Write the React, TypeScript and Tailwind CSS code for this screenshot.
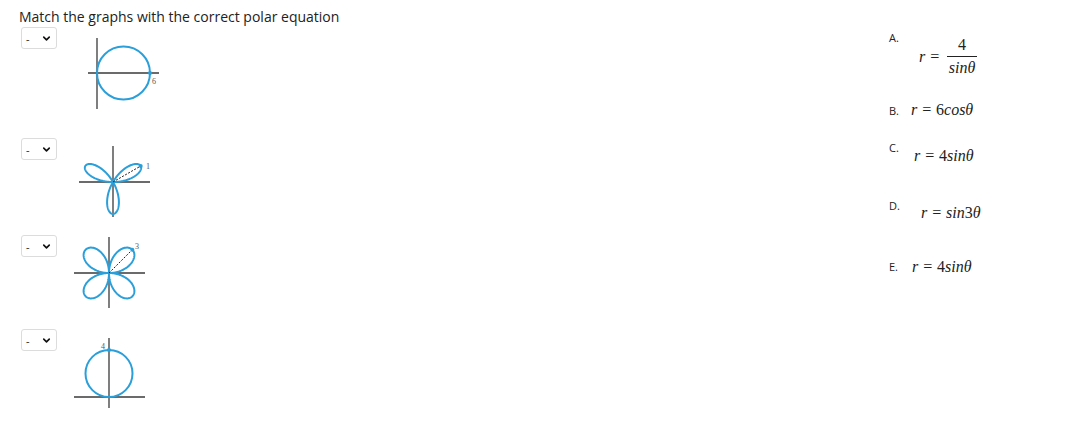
import React from "react";
import { ChevronDown } from "lucide-react";

const BLUE = "#2a9fda";
const AXIS = "#3a3a3a";

function rosePath(ox: number, oy: number, a: number, k: number, tMax: number) {
  const pts: string[] = [];
  const n = 360;
  for (let i = 0; i <= n; i++) {
    const t = (tMax * i) / n;
    const r = a * Math.sin(k * t);
    const x = ox + r * Math.cos(t);
    const y = oy - r * Math.sin(t);
    pts.push(`${i === 0 ? "M" : "L"}${x.toFixed(2)},${y.toFixed(2)}`);
  }
  return pts.join(" ");
}

function Select() {
  return (
    <div className="flex h-[22px] w-[36px] shrink-0 items-center justify-between rounded-[3px] border border-[#dcdcdc] bg-white pl-[4px] pr-[4px]">
      <span className="text-[11px] leading-none text-[#222]" style={{ fontFamily: "'Open Sans', sans-serif" }}>-</span>
      <ChevronDown size={11} strokeWidth={3.5} color="#111" />
    </div>
  );
}

function Graph1() {
  return (
    <svg width="100" height="72" className="ml-[13px] mt-[11px] shrink-0">
      <line x1="27" y1="0" x2="27" y2="71" stroke={AXIS} strokeWidth="1.3" />
      <line x1="18" y1="35" x2="89" y2="35" stroke={AXIS} strokeWidth="1.3" />
      <circle cx="53.5" cy="35" r="26.5" fill="none" stroke={BLUE} strokeWidth="2" />
      <circle cx="80" cy="35" r="2" fill={BLUE} />
      <text x="82" y="46" fontSize="8" fill="#555" fontFamily="'Liberation Serif', serif">6</text>
    </svg>
  );
}

function Graph2() {
  const ox = 43, oy = 36, a = 32;
  const tx = ox + a * Math.cos(Math.PI / 6);
  const ty = oy - a * Math.sin(Math.PI / 6);
  return (
    <svg width="100" height="72" className="ml-[13px] mt-[8px] shrink-0">
      <line x1={ox} y1="0" x2={ox} y2="71" stroke={AXIS} strokeWidth="1.3" />
      <line x1="9" y1={oy} x2="80" y2={oy} stroke={AXIS} strokeWidth="1.3" />
      <path d={rosePath(ox, oy, a, 3, Math.PI)} fill="none" stroke={BLUE} strokeWidth="2" />
      <line x1={ox} y1={oy} x2={tx} y2={ty} stroke="#222" strokeWidth="1" strokeDasharray="2 1.5" />
      <circle cx={tx} cy={ty} r="2" fill={BLUE} />
      <text x="76" y="23" fontSize="8" fill="#555" fontFamily="'Liberation Serif', serif">1</text>
    </svg>
  );
}

function Graph3() {
  const ox = 39, oy = 36, a = 33;
  const tx = ox + a * Math.cos(Math.PI / 4);
  const ty = oy - a * Math.sin(Math.PI / 4);
  return (
    <svg width="100" height="72" className="ml-[13px] mt-[2px] shrink-0">
      <line x1={ox} y1="0" x2={ox} y2="71" stroke={AXIS} strokeWidth="1.3" />
      <line x1="4" y1={oy} x2="75" y2={oy} stroke={AXIS} strokeWidth="1.3" />
      <path d={rosePath(ox, oy, a, 2, 2 * Math.PI)} fill="none" stroke={BLUE} strokeWidth="2" />
      <line x1={ox} y1={oy} x2={tx} y2={ty} stroke="#222" strokeWidth="1" strokeDasharray="2 1.5" />
      <circle cx={tx} cy={ty} r="2" fill={BLUE} />
      <text x="65" y="12" fontSize="8" fill="#555" fontFamily="'Liberation Serif', serif">3</text>
    </svg>
  );
}

function Graph4() {
  return (
    <svg width="100" height="72" className="ml-[13px] mt-[9px] shrink-0">
      <line x1="39" y1="0" x2="39" y2="70" stroke={AXIS} strokeWidth="1.3" />
      <line x1="4" y1="59" x2="75" y2="59" stroke={AXIS} strokeWidth="1.3" />
      <circle cx="39" cy="35.5" r="23.5" fill="none" stroke={BLUE} strokeWidth="2" />
      <circle cx="39" cy="12" r="2" fill={BLUE} />
      <text x="31" y="11" fontSize="8" fill="#555" fontFamily="'Liberation Serif', serif">4</text>
    </svg>
  );
}

const mathFont = { fontFamily: "'Liberation Serif', 'DejaVu Serif', serif" };
const labelFont = { fontFamily: "'Open Sans', 'Liberation Sans', sans-serif" };

function Label({ children, className }: { children: React.ReactNode; className?: string }) {
  return (
    <span className={"w-[22px] shrink-0 text-[11px] leading-[11px] text-[#222] " + (className ?? "")} style={labelFont}>
      {children}
    </span>
  );
}

function Eq({ children, className }: { children: React.ReactNode; className?: string }) {
  return (
    <span className={"whitespace-pre text-[16px] italic leading-[16px] text-[#222] " + (className ?? "")} style={mathFont}>
      {children}
    </span>
  );
}

function N({ children }: { children: React.ReactNode }) {
  return <span className="not-italic">{children}</span>;
}

export default function App() {
  return (
    <div className="h-[432px] w-[1081px] bg-white">
      <div className="flex">
        <div className="w-[868px] shrink-0 pl-[19px] pt-[9px]">
          <div className="text-[14px] leading-[16px] text-[#222]" style={{ fontFamily: "'Open Sans', sans-serif" }}>
            Match the graphs with the correct polar equation
          </div>
          <div className="mt-[2px] flex h-[111px] items-start pl-[2px]">
            <Select />
            <Graph1 />
          </div>
          <div className="flex h-[97px] items-start pl-[2px]">
            <Select />
            <Graph2 />
          </div>
          <div className="flex h-[94px] items-start pl-[2px]">
            <Select />
            <Graph3 />
          </div>
          <div className="flex items-start pl-[2px]">
            <Select />
            <Graph4 />
          </div>
        </div>
        <div className="flex flex-col pl-[21px] pt-[32px]">
          <div className="flex h-[68px] items-start">
            <Label>A.</Label>
            <div className="ml-[8px] mt-[5px] flex items-center">
              <Eq>r = </Eq>
              <div className="ml-[3px] flex flex-col items-center">
                <Eq><N>4</N></Eq>
                <div className="my-[3px] h-px w-[30px] bg-[#222]" />
                <Eq>sinθ</Eq>
              </div>
            </div>
          </div>
          <div className="flex h-[40px] items-start">
            <Label className="mt-[5px]">B.</Label>
            <Eq className="mt-[2px]">r = <N>6</N>cosθ</Eq>
          </div>
          <div className="flex h-[58px] items-start">
            <Label className="mt-[2px]">C.</Label>
            <Eq className="ml-[3px] mt-[8px]">r = <N>4</N>sinθ</Eq>
          </div>
          <div className="flex h-[58px] items-start">
            <Label className="mt-[2px]">D.</Label>
            <Eq className="ml-[10px] mt-[7px]">r = sin<N>3</N>θ</Eq>
          </div>
          <div className="flex items-start">
            <Label className="mt-[5px]">E.</Label>
            <Eq className="ml-[1px] mt-[3px]">r = <N>4</N>sinθ</Eq>
          </div>
        </div>
      </div>
    </div>
  );
}
